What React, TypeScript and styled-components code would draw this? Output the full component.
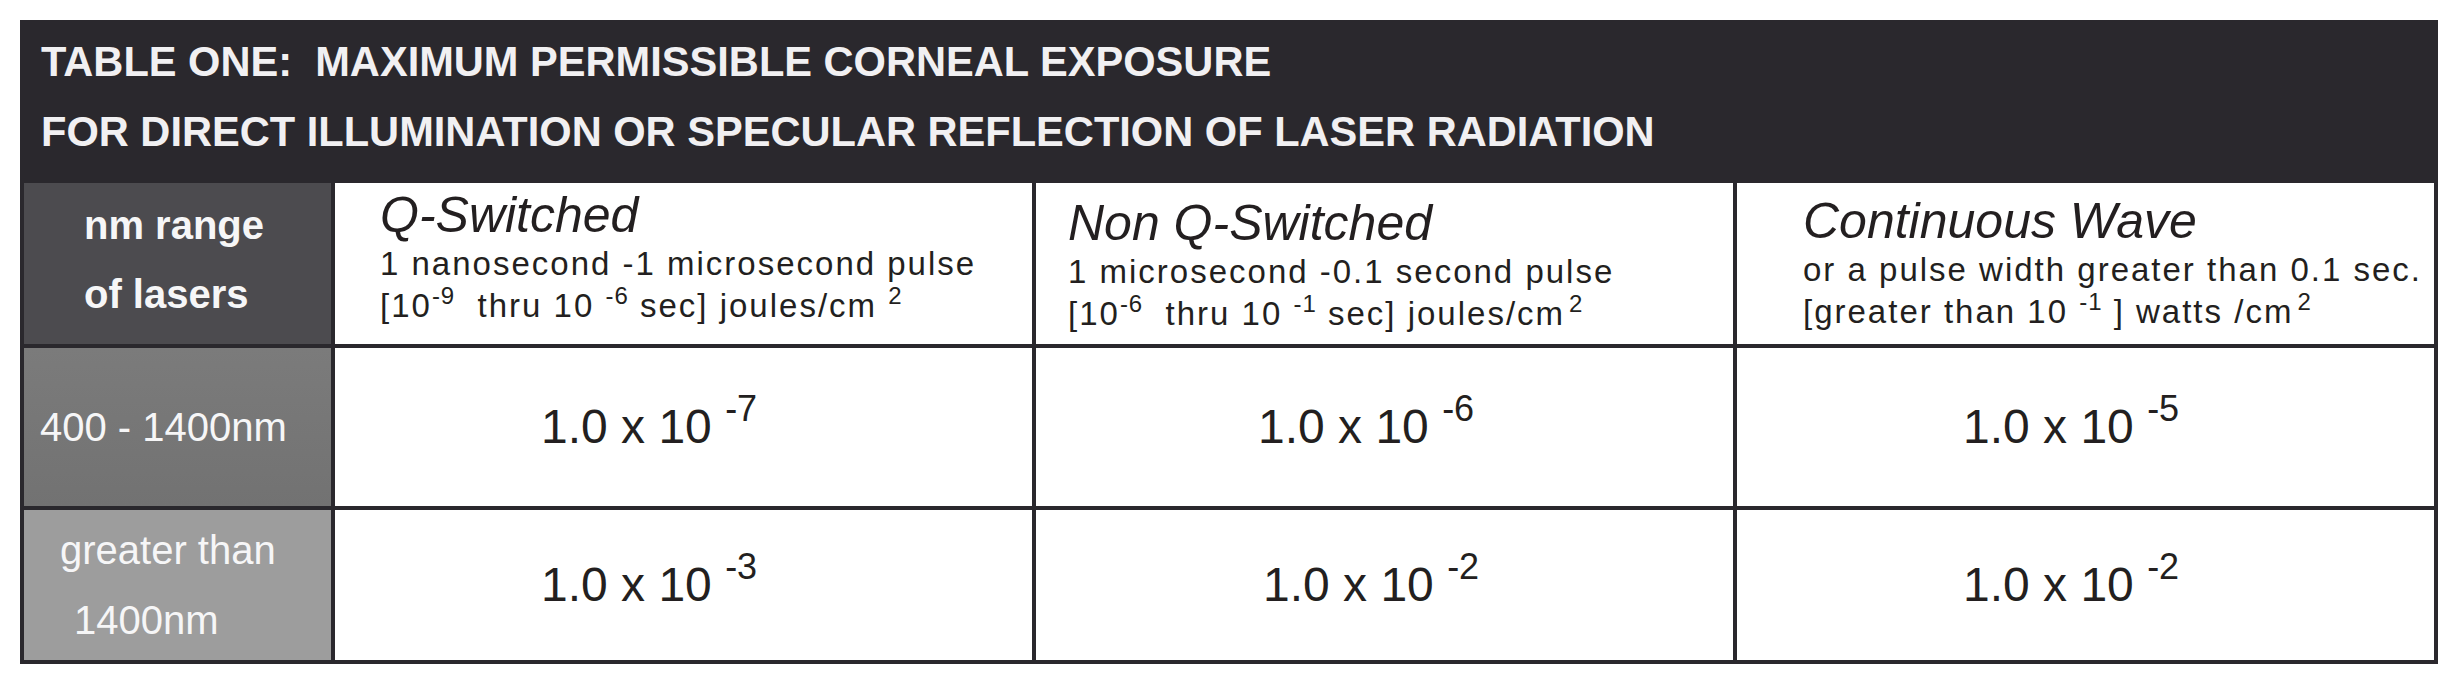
import React from "react";
import styled, { createGlobalStyle } from "styled-components";

const GlobalStyle = createGlobalStyle`
  html, body {
    margin: 0;
    padding: 0;
    background: #ffffff;
  }
  body {
    font-family: "Liberation Sans", Arial, Helvetica, sans-serif;
    color: #231f20;
  }
`;

const Page = styled.div`
  padding: 20px;
  width: 2458px;
  height: 688px;
  box-sizing: border-box;
`;

const Table = styled.div`
  width: 2418px;
  background: #2a282d;
`;

const TitleBar = styled.div`
  padding: 7px 21px 16px;
  color: #f1f0f2;
  font-size: 41.6px;
  font-weight: 700;
  line-height: 70px;
  white-space: pre;
`;

const Grid = styled.div`
  display: grid;
  grid-template-columns: 307px repeat(3, 1fr);
  grid-template-rows: 161px 158px 150px;
  gap: 4px;
  padding: 0 4px 4px;
`;

const tones = {
  head: "#4c4b4f",
  mid: "linear-gradient(180deg, #7b7b7b 0%, #727272 100%)",
  light: "#9d9d9d",
};

const LabelCell = styled.div<{ $tone: keyof typeof tones; $bold?: boolean; $shift?: number }>`
  background: ${(p) => tones[p.$tone]};
  color: #f6f6f7;
  font-size: 40px;
  font-weight: ${(p) => (p.$bold ? 700 : 400)};
  display: flex;
  flex-direction: column;
  justify-content: center;
  padding-bottom: ${(p) => p.$shift ?? 0}px;
  box-sizing: border-box;
`;

const LabelLine = styled.div<{ $indent: number; $lh?: number }>`
  padding-left: ${(p) => p.$indent}px;
  line-height: ${(p) => p.$lh ?? 70}px;
  white-space: nowrap;
`;

const HeadCell = styled.div<{ $padLeft: number; $padTop: number }>`
  background: #ffffff;
  padding: ${(p) => p.$padTop}px 0 0 ${(p) => p.$padLeft}px;
  box-sizing: border-box;
`;

const HeadTitle = styled.div`
  font-size: 50px;
  font-style: italic;
  line-height: 56px;
  white-space: nowrap;
`;

const HeadText = styled.div`
  font-size: 33px;
  line-height: 42px;
  letter-spacing: 2px;
  white-space: pre;
`;

const Sup = styled.span<{ $gap?: number }>`
  font-size: 24px;
  line-height: 0;
  letter-spacing: 1px;
  vertical-align: 13px;
  margin-left: ${(p) => p.$gap ?? 0}px;
`;

const ValueCell = styled.div<{ $padLeft: number }>`
  background: #ffffff;
  display: flex;
  align-items: center;
  padding-left: ${(p) => p.$padLeft}px;
  box-sizing: border-box;
`;

const ValueText = styled.div`
  font-size: 48px;
  line-height: 48px;
  white-space: pre;
`;

const Exp = styled.span`
  font-size: 36px;
  line-height: 0;
  vertical-align: 22px;
`;

const Value = ({ exp }: { exp: string }) => (
  <ValueText>
    1.0 x 10 <Exp>{exp}</Exp>
  </ValueText>
);

const rows = [
  { tone: "mid" as const, values: ["-7", "-6", "-5"], pads: [206, 222, 226] },
  { tone: "light" as const, values: ["-3", "-2", "-2"], pads: [206, 227, 226] },
];

export default function App() {
  return (
    <>
      <GlobalStyle />
      <Page>
        <Table>
          <TitleBar>
            {"TABLE ONE:  MAXIMUM PERMISSIBLE CORNEAL EXPOSURE\nFOR DIRECT ILLUMINATION OR SPECULAR REFLECTION OF LASER RADIATION"}
          </TitleBar>
          <Grid>
            <LabelCell $tone="head" $bold $shift={8}>
              <LabelLine $indent={60} $lh={69}>nm range</LabelLine>
              <LabelLine $indent={60} $lh={69}>of lasers</LabelLine>
            </LabelCell>

            <HeadCell $padLeft={45} $padTop={4}>
              <HeadTitle>Q-Switched</HeadTitle>
              <HeadText>1 nanosecond -1 microsecond pulse</HeadText>
              <HeadText>
                [10<Sup>-9</Sup>{"  thru 10 "}<Sup>-6</Sup>{" sec] joules/cm "}<Sup>2</Sup>
              </HeadText>
            </HeadCell>

            <HeadCell $padLeft={32} $padTop={12}>
              <HeadTitle>Non Q-Switched</HeadTitle>
              <HeadText>1 microsecond -0.1 second pulse</HeadText>
              <HeadText>
                [10<Sup>-6</Sup>{"  thru 10 "}<Sup>-1</Sup>{" sec] joules/cm"}<Sup $gap={4}>2</Sup>
              </HeadText>
            </HeadCell>

            <HeadCell $padLeft={66} $padTop={10}>
              <HeadTitle>Continuous Wave</HeadTitle>
              <HeadText>or a pulse width greater than 0.1 sec.</HeadText>
              <HeadText>
                {"[greater than 10 "}<Sup>-1</Sup>{" ] watts /cm"}<Sup $gap={4}>2</Sup>
              </HeadText>
            </HeadCell>

            {rows.map((row, i) => (
              <React.Fragment key={i}>
                {i === 0 ? (
                  <LabelCell $tone={row.tone}>
                    <LabelLine $indent={16}>400 - 1400nm</LabelLine>
                  </LabelCell>
                ) : (
                  <LabelCell $tone={row.tone}>
                    <LabelLine $indent={36}>greater than</LabelLine>
                    <LabelLine $indent={50}>1400nm</LabelLine>
                  </LabelCell>
                )}
                {row.values.map((v, j) => (
                  <ValueCell key={j} $padLeft={row.pads[j]}>
                    <Value exp={v} />
                  </ValueCell>
                ))}
              </React.Fragment>
            ))}
          </Grid>
        </Table>
      </Page>
    </>
  );
}
